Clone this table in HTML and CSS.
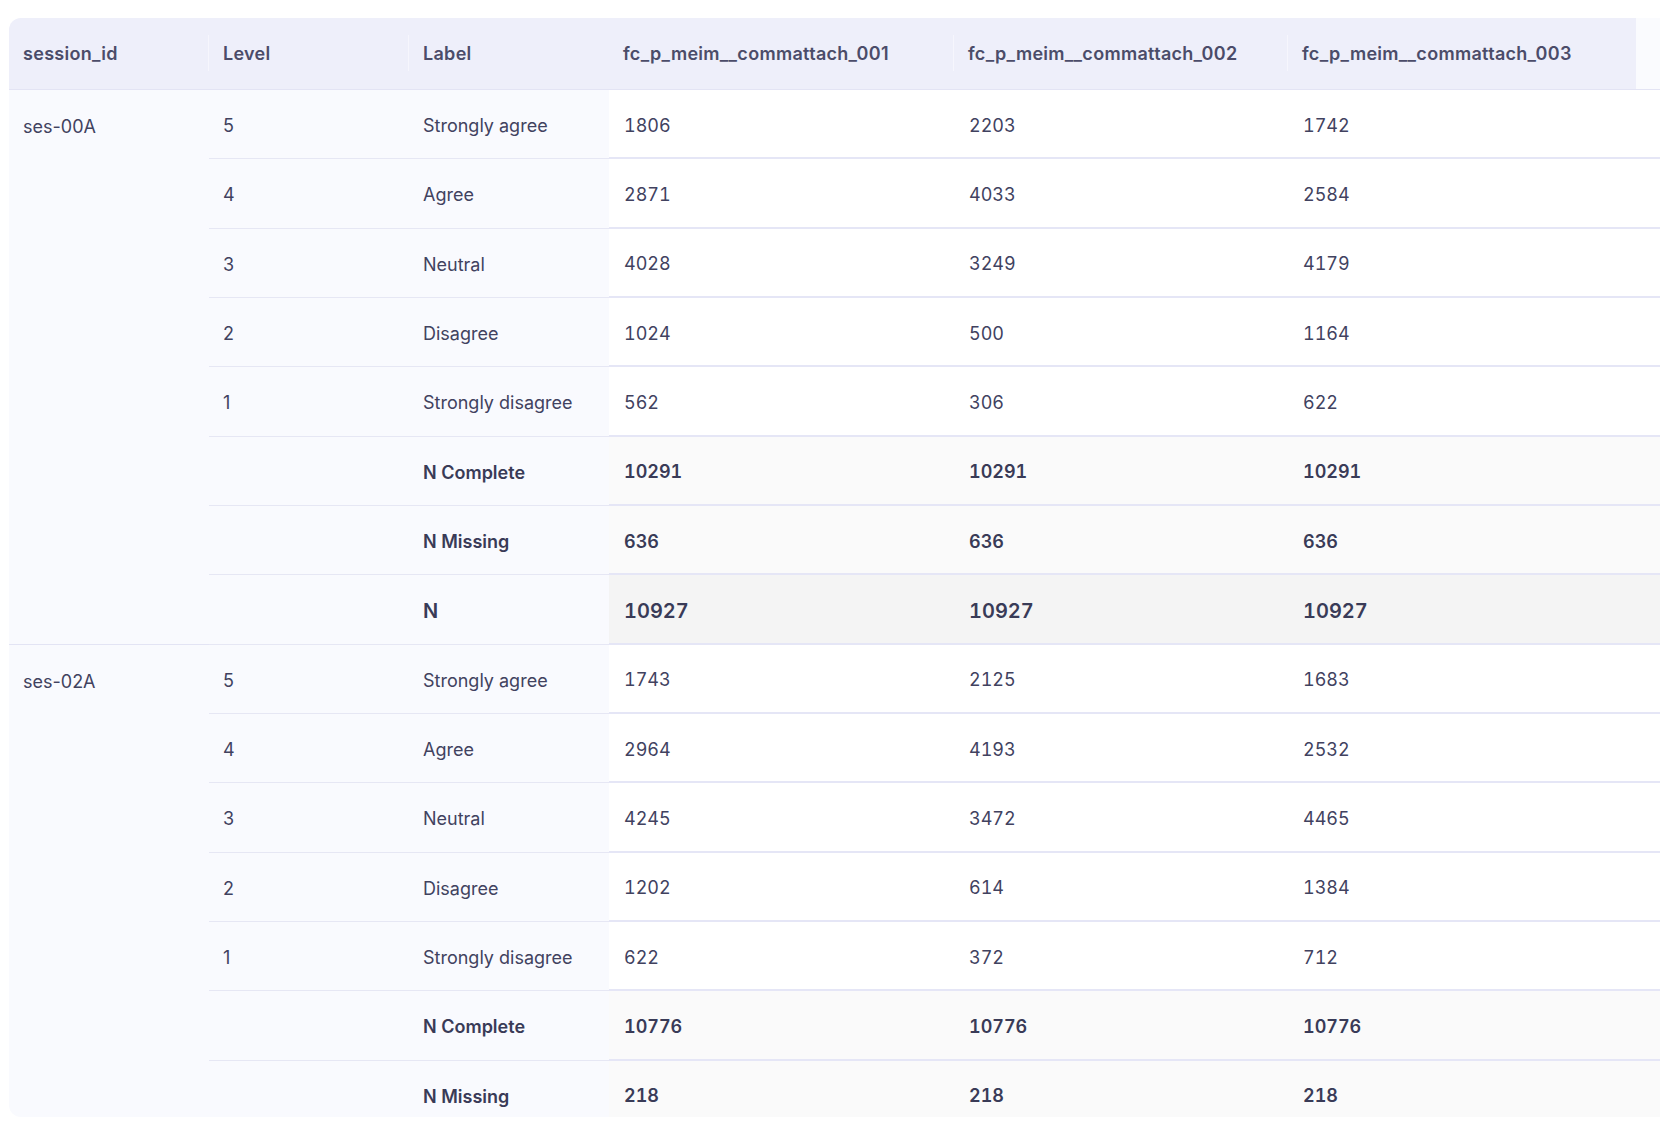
FILE: index.html
```html
<!DOCTYPE html>
<html lang="en">
<head>
<meta charset="utf-8">
<title>Frequency table</title>
<link rel="stylesheet" href="styles.css">
</head>
<body>
<div class="card">
<table class="freq">
<colgroup>
<col class="c-sess"><col class="c-level"><col class="c-label"><col class="c-d1"><col class="c-d2"><col class="c-d3"><col class="c-extra">
</colgroup>
<thead>
<tr>
<th class="div">session_id</th>
<th class="div">Level</th>
<th>Label</th>
<th class="div">fc_p_meim__commattach_001</th>
<th class="div">fc_p_meim__commattach_002</th>
<th>fc_p_meim__commattach_003</th>
<th class="blank"></th>
</tr>
</thead>
<tbody>
<tr><td class="sess" rowspan="8">ses-00A</td><td class="lv">5</td><td class="lb">Strongly agree</td><td class="d">1806</td><td class="d">2203</td><td class="d">1742</td><td class="d"></td></tr>
<tr><td class="lv">4</td><td class="lb">Agree</td><td class="d">2871</td><td class="d">4033</td><td class="d">2584</td><td class="d"></td></tr>
<tr><td class="lv">3</td><td class="lb">Neutral</td><td class="d">4028</td><td class="d">3249</td><td class="d">4179</td><td class="d"></td></tr>
<tr><td class="lv">2</td><td class="lb">Disagree</td><td class="d">1024</td><td class="d">500</td><td class="d">1164</td><td class="d"></td></tr>
<tr><td class="lv">1</td><td class="lb">Strongly disagree</td><td class="d">562</td><td class="d">306</td><td class="d">622</td><td class="d"></td></tr>
<tr class="stat"><td class="lv"></td><td class="lb">N Complete</td><td class="d">10291</td><td class="d">10291</td><td class="d">10291</td><td class="d"></td></tr>
<tr class="stat"><td class="lv"></td><td class="lb">N Missing</td><td class="d">636</td><td class="d">636</td><td class="d">636</td><td class="d"></td></tr>
<tr class="total"><td class="lv"></td><td class="lb">N</td><td class="d">10927</td><td class="d">10927</td><td class="d">10927</td><td class="d"></td></tr>

<tr><td class="sess" rowspan="8">ses-02A</td><td class="lv">5</td><td class="lb">Strongly agree</td><td class="d">1743</td><td class="d">2125</td><td class="d">1683</td><td class="d"></td></tr>
<tr><td class="lv">4</td><td class="lb">Agree</td><td class="d">2964</td><td class="d">4193</td><td class="d">2532</td><td class="d"></td></tr>
<tr><td class="lv">3</td><td class="lb">Neutral</td><td class="d">4245</td><td class="d">3472</td><td class="d">4465</td><td class="d"></td></tr>
<tr><td class="lv">2</td><td class="lb">Disagree</td><td class="d">1202</td><td class="d">614</td><td class="d">1384</td><td class="d"></td></tr>
<tr><td class="lv">1</td><td class="lb">Strongly disagree</td><td class="d">622</td><td class="d">372</td><td class="d">712</td><td class="d"></td></tr>
<tr class="stat"><td class="lv"></td><td class="lb">N Complete</td><td class="d">10776</td><td class="d">10776</td><td class="d">10776</td><td class="d"></td></tr>
<tr class="stat"><td class="lv"></td><td class="lb">N Missing</td><td class="d">218</td><td class="d">218</td><td class="d">218</td><td class="d"></td></tr>
<tr class="total"><td class="lv"></td><td class="lb">N</td><td class="d">10994</td><td class="d">10994</td><td class="d">10994</td><td class="d"></td></tr>
</tbody>
</table>
</div>
</body>
</html>
```

FILE: styles.css
```css
html {
  overflow: hidden;
}
body {
  margin: 0;
  padding: 18px 0 0 9px;
  background: #ffffff;
  font-family: Inter, "Noto Sans", sans-serif;
  color: #41425f;
}
.card {
  width: 1760px;
  height: 1099px;
  overflow: hidden;
  border-radius: 12px;
  background: #f9fafe;
}
.freq {
  table-layout: fixed;
  width: 1727px;
  border-collapse: separate;
  border-spacing: 0;
  font-size: 18px;
}
.c-sess, .c-level, .c-label { width: 200px; }
.c-d1 { width: 345px; }
.c-d2 { width: 334px; }
.c-d3 { width: 348px; }
.c-extra { width: 100px; }

.freq th {
  position: relative;
  height: 71px;
  padding: 0 14px;
  text-align: left;
  font-weight: 600;
  letter-spacing: 0.3px;
  color: #4b4c69;
  background: #eeeffa;
  border-bottom: 1px solid #e3e4f4;
  white-space: nowrap;
}
.freq th.blank {
  background: #fafbfe;
}
.freq th.div::after {
  content: "";
  position: absolute;
  right: 0;
  top: 17px;
  bottom: 18px;
  width: 1px;
  background: #f6f6fd;
}
.freq tbody tr {
  height: 69.33px;
}
.freq td {
  padding: 4px 14px 0;
  vertical-align: middle;
  line-height: 22px;
  white-space: nowrap;
}
.freq td.sess {
  vertical-align: top;
  padding-top: 26px;
  border-bottom: 1px solid #e3e4f4;
}
.freq td.lv, .freq td.lb {
  border-bottom: 1px solid #e6e7f4;
}
.freq td.d {
  background: #ffffff;
  padding-left: 15px;
  font-variant-numeric: tabular-nums;
  border-bottom: 2px solid #e5e6f6;
}
.freq tr.stat td {
  font-weight: 600;
  color: #393b57;
}
.freq tr.stat td.d {
  background: #fafafa;
}
.freq tr.total td {
  font-weight: 600;
  font-size: 20px;
  color: #393b57;
}
.freq tr.total td.d {
  background: #f4f4f4;
}
```
